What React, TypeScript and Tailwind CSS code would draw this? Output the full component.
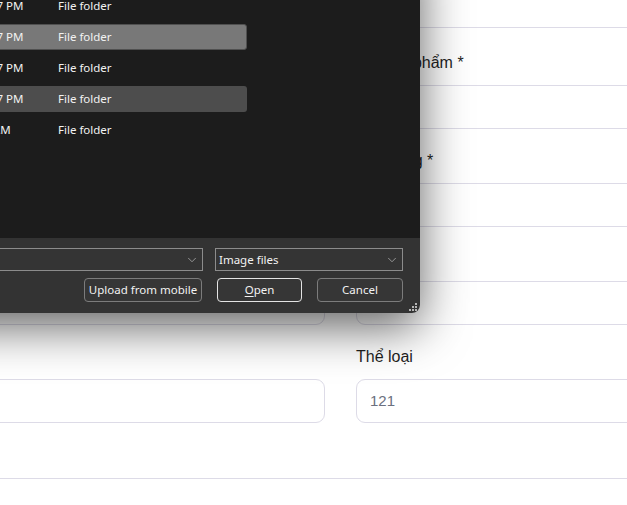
import { ChevronDown } from 'lucide-react';

const rows = [
  { name: 'Hình ảnh sản phẩm', date: '5/21/2025 10:47 PM', tone: 'none' },
  { name: 'Ảnh bìa sách', date: '5/21/2025 10:37 PM', tone: 'selected' },
  { name: 'Tài liệu', date: '5/20/2025 11:27 PM', tone: 'none' },
  { name: 'Thiết kế', date: '5/20/2025 10:17 PM', tone: 'hover' },
  { name: 'Tải xuống', date: '5/9/2025 9:05 AM', tone: 'none' },
];

const leftLabels = ['Tên sách *', 'Tác giả *', 'Giá bán *', 'Nhà xuất bản'];
const rightLabels = ['Mã sản phẩm *', 'Số lượng *', 'Giá *', 'Thể loại'];

function Field({ label, value }: { label: string; value?: string }) {
  return (
    <label className="flex flex-col">
      <span className="mb-[10px] text-base leading-6 text-[#1f1f1f]">{label}</span>
      <div className="flex h-11 items-center rounded-[9px] border border-[#dddbe7] bg-white px-[13px] text-[15px] text-[#6b7080]">
        {value}
      </div>
    </label>
  );
}

function FileDialog() {
  return (
    <div className="absolute left-[-280px] top-[-57px] flex h-[370px] w-[700px] flex-col overflow-hidden rounded-br-lg font-['Noto_Sans','Open_Sans',sans-serif] text-[11.5px] text-[#f2f2f2] shadow-[0_14px_48px_rgba(0,0,0,0.62)]">
      <div className="flex-1 bg-[#1c1c1c] pt-[50px]">
        {rows.map((row) => (
          <div
            key={row.name}
            className={
              row.tone === 'selected'
                ? 'ml-[20px] mb-[5px] flex h-[26px] w-[507px] items-center rounded-[3px] border border-[#505050] bg-[#787878]'
                : row.tone === 'hover'
                  ? 'ml-[20px] mb-[5px] flex h-[26px] w-[507px] items-center rounded-[3px] border border-transparent bg-[#4d4d4d]'
                  : 'ml-[20px] mb-[5px] flex h-[26px] w-[507px] items-center rounded-[3px] border border-transparent'
            }
          >
            <span className="w-[175px] truncate pl-[28px]">{row.name}</span>
            <span className="w-[142px] whitespace-nowrap">{row.date}</span>
            <span>File folder</span>
          </div>
        ))}
      </div>
      <div className="relative h-[75px] bg-[#333333] pr-[17px] pt-[10px]">
        <div className="flex justify-end gap-[12px]">
          <div className="flex h-[23px] w-[383px] items-center justify-end border border-[#8c8c8c] bg-[#343434] pr-[3px]">
            <ChevronDown size={14} strokeWidth={1.2} className="text-[#bdbdbd]" />
          </div>
          <div className="flex h-[23px] w-[188px] items-center justify-between border border-[#8c8c8c] bg-[#343434] pl-[3px] pr-[3px]">
            <span>Image files</span>
            <ChevronDown size={14} strokeWidth={1.2} className="text-[#bdbdbd]" />
          </div>
        </div>
        <div className="mt-[7px] flex justify-end gap-[15px]">
          <button className="h-[24px] w-[118px] rounded-[4px] border border-[#7c7c7c] bg-[#363636]">
            Upload from mobile
          </button>
          <button className="h-[24px] w-[85px] rounded-[4px] border border-[#e4e4e4] bg-[#363636]">
            <span className="underline underline-offset-2">O</span>pen
          </button>
          <button className="h-[24px] w-[86px] rounded-[4px] border border-[#7c7c7c] bg-[#363636]">
            Cancel
          </button>
        </div>
        <svg className="absolute bottom-[1px] right-[2px]" width="9" height="9" viewBox="0 0 9 9">
          <rect x="6" y="0" width="2" height="2" fill="#b5b5b5" />
          <rect x="3" y="3" width="2" height="2" fill="#b5b5b5" />
          <rect x="6" y="3" width="2" height="2" fill="#b5b5b5" />
          <rect x="0" y="6" width="2" height="2" fill="#b5b5b5" />
          <rect x="3" y="6" width="2" height="2" fill="#b5b5b5" />
          <rect x="6" y="6" width="2" height="2" fill="#b5b5b5" />
        </svg>
      </div>
    </div>
  );
}

export default function App() {
  return (
    <div className="relative h-[505px] w-[627px] overflow-hidden bg-white font-['Liberation_Sans',Arial,sans-serif]">
      <div className="ml-[-335px] w-[1351px]">
        <div className="mt-[-16px] grid grid-cols-2 gap-x-[31px]">
          <div className="h-11 rounded-[9px] border border-[#dddbe7]" />
          <div className="h-11 rounded-[9px] border border-[#dddbe7]" />
        </div>
        <div className="mt-[23px] grid grid-cols-2 gap-x-[31px] gap-y-[20px]">
          {rightLabels.map((label, i) => (
            <>
              <Field key={`l${i}`} label={leftLabels[i]} />
              <Field key={`r${i}`} label={label} value={i === 3 ? '121' : undefined} />
            </>
          ))}
        </div>
        <div className="mt-[55px] border-t border-[#dddbe7]" />
      </div>
      <FileDialog />
    </div>
  );
}
